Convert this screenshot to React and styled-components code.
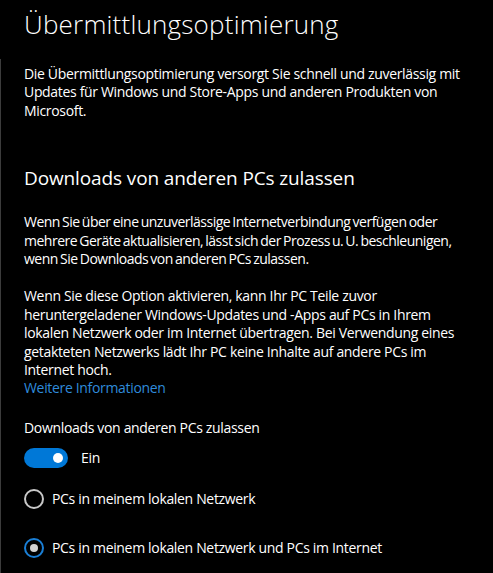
import React from 'react'
import styled, {createGlobalStyle} from 'styled-components'

const GlobalStyle = createGlobalStyle`
  html, body {
    margin: 0;
    padding: 0;
    background: #000;
  }
  body {
    font-family: 'Open Sans', 'Noto Sans', sans-serif;
    color: #fff;
    letter-spacing: -0.33px;
  }
`

const Page = styled.main`
  min-height: 100vh;
  box-sizing: border-box;
  padding: 7px 0 0 23px;
  border-left: 1px solid;
  border-image: linear-gradient(to bottom, #000 60px, #3c3c3c 60px) 1;
  display: flex;
  flex-direction: column;
`

const Title = styled.h1`
  margin: 0;
  font-size: 26px;
  line-height: 34px;
  font-weight: 300;
  letter-spacing: 0.2px;
`

const Content = styled.div`
  width: 445px;
`

const Text = styled.p`
  margin: ${p => p.$top || 0}px 0 0;
  font-size: 14px;
  line-height: 18.4px;
  letter-spacing: ${p => (p.$tight ? '-0.5px' : 'inherit')};
  word-spacing: ${p => (p.$tight ? '-1px' : 'normal')};
`

const Heading = styled.h2`
  margin: 45px 0 0;
  font-size: 19px;
  line-height: 26px;
  font-weight: 400;
  letter-spacing: -0.12px;
`

const Link = styled.a`
  display: block;
  font-size: 14px;
  line-height: 18.4px;
  color: #2f8bdb;
  text-decoration: none;
`

const Label = styled.div`
  margin-top: 21px;
  font-size: 14px;
  line-height: 18.4px;
`

const ToggleRow = styled.div`
  margin-top: 11px;
  display: flex;
  align-items: center;
  gap: 13px;
  font-size: 14px;
  line-height: 20px;
`

const Track = styled.span`
  position: relative;
  width: 44px;
  height: 20px;
  border-radius: 10px;
  background: #0078d7;
  &::after {
    content: '';
    position: absolute;
    right: 5px;
    top: 5px;
    width: 10px;
    height: 10px;
    border-radius: 50%;
    background: #fff;
  }
`

const Options = styled.div`
  margin-top: 21px;
  display: flex;
  flex-direction: column;
  gap: 29px;
`

const Option = styled.label`
  display: flex;
  align-items: center;
  gap: 8px;
  font-size: 14px;
  line-height: 20px;
`

const Radio = styled.span`
  position: relative;
  box-sizing: border-box;
  width: 20px;
  height: 20px;
  border-radius: 50%;
  border: 2px solid ${p => (p.$checked ? '#1a7fd6' : '#c8c8c8')};
  &::after {
    content: '';
    display: ${p => (p.$checked ? 'block' : 'none')};
    position: absolute;
    left: 4px;
    top: 4px;
    width: 8px;
    height: 8px;
    border-radius: 50%;
    background: #d2d2d2;
  }
`

const options = [
  {label: 'PCs in meinem lokalen Netzwerk', checked: false},
  {label: 'PCs in meinem lokalen Netzwerk und PCs im Internet', checked: true},
]

const App = () => (
  <>
    <GlobalStyle />
    <Page>
      <Title>Übermittlungsoptimierung</Title>
      <Content>
        <Text $top={24}>
          Die Übermittlungsoptimierung versorgt Sie schnell und zuverlässig mit
          Updates für Windows und Store-Apps und anderen Produkten von
          Microsoft.
        </Text>
        <Heading>Downloads von anderen PCs zulassen</Heading>
        <Text $top={22} $tight>
          Wenn Sie über eine unzuverlässige Internetverbindung verfügen oder
          mehrere Geräte aktualisieren, lässt sich der Prozess u. U.
          beschleunigen, wenn Sie Downloads von anderen PCs zulassen.
        </Text>
        <Text $top={19}>
          Wenn Sie diese Option aktivieren, kann Ihr PC Teile zuvor
          heruntergeladener Windows-Updates und -Apps auf PCs in Ihrem lokalen
          Netzwerk oder im Internet übertragen. Bei Verwendung eines getakteten
          Netzwerks lädt Ihr PC keine Inhalte auf andere PCs im Internet hoch.
        </Text>
        <Link href="#">Weitere Informationen</Link>
        <Label>Downloads von anderen PCs zulassen</Label>
        <ToggleRow>
          <Track />
          Ein
        </ToggleRow>
        <Options>
          {options.map(o => (
            <Option key={o.label}>
              <Radio $checked={o.checked} />
              {o.label}
            </Option>
          ))}
        </Options>
      </Content>
    </Page>
  </>
)

export default App
